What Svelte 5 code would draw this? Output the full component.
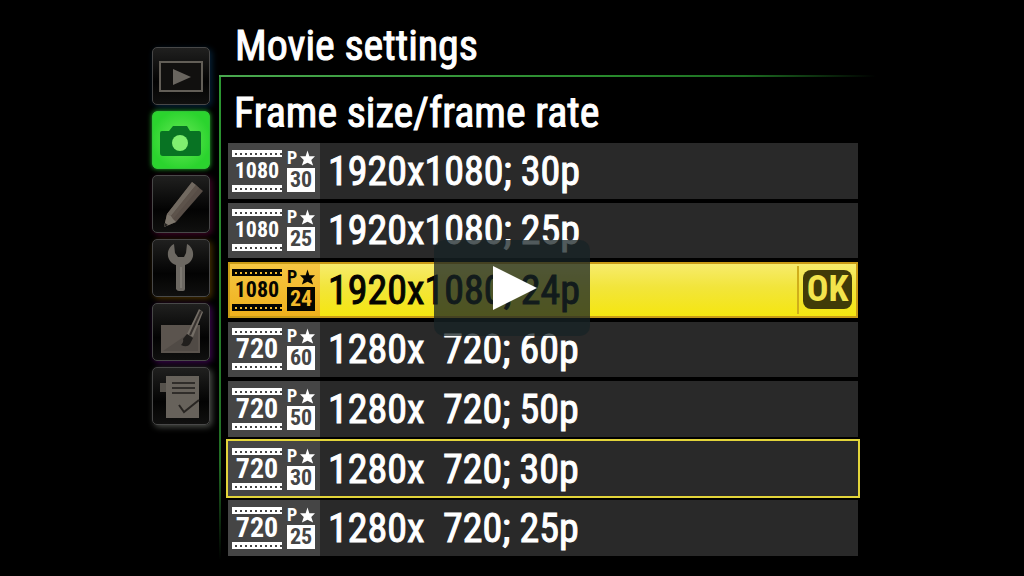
<script>
  let tabs = ["Playback", "Shooting", "Custom settings", "Setup", "Retouch", "My menu"];
  let activeTab = "Shooting";

  let modes = [
    { size: "1080", rate: "30", label: "1920x1080; 30p" },
    { size: "1080", rate: "25", label: "1920x1080; 25p" },
    { size: "1080", rate: "24", label: "1920x1080; 24p" },
    { size: "720", rate: "60", label: "1280x  720; 60p" },
    { size: "720", rate: "50", label: "1280x  720; 50p" },
    { size: "720", rate: "30", label: "1280x  720; 30p" },
    { size: "720", rate: "25", label: "1280x  720; 25p" },
  ];
  let selected = 2;
  let current = 5;
</script>

<main>
  <nav>
    {#each tabs as tab}
      <button
        class="tab {tab.split(' ')[0].toLowerCase()}"
        class:active={tab === activeTab}
        aria-label={tab}
        on:click={() => (activeTab = tab)}
      >
        <svg viewBox="0 0 56 56" aria-hidden="true">
          {#if tab === "Playback"}
            <rect x="7" y="14" width="42" height="29" fill="#11100f" stroke="#625e57" stroke-width="2" />
            <path d="M20 21L38 29L20 37Z" fill="#69655f" />
          {:else if tab === "Shooting"}
            <path
              d="M9 19H16L20 14H34L37 19H46Q48 19 48 21V41Q48 44 45 44H10Q7 44 7 41V21Q7 19 9 19Z"
              fill="#087323"
            />
            <circle cx="27" cy="31" r="8" fill="#80ef70" />
          {:else if tab === "Custom settings"}
            <path d="M39 6L50 15L23 46L11 51L14 38Z" fill="#574d46" />
            <path d="M39 6L43 9L18 40L14 38Z" fill="#716960" />
            <path d="M43 9L46 12L20 43L18 40Z" fill="#5d534b" />
            <path d="M14 38L18 40L20 43L23 46L11 51Z" fill="#7d766c" />
            <path d="M12 47L15 49L11 51Z" fill="#22201e" />
          {:else if tab === "Setup"}
            <path
              d="M21 4C13 8 12 21 23 25V49Q24 51 26 51H30Q32 51 32 49V25C43 21 42 8 34 4L33 13L31 17H25L22 13Z"
              fill="#6c6862"
            />
            <path d="M28 27V48" stroke="#7d7972" stroke-width="2" />
          {:else if tab === "Retouch"}
            <rect x="8" y="21" width="39" height="28" fill="#5b544e" />
            <path d="M10 47L45 23V47Z" fill="#504a45" />
            <path d="M46 5L50 8L40 33L34 30Z" fill="#746e66" />
            <path d="M48 7L37 31" stroke="#37322f" stroke-width="2" />
            <path d="M34 30L40 34L37 40Q34 44 28 41Q31 38 30 35Z" fill="#211f1d" />
          {:else}
            <path d="M7 15H14V24H7Z" fill="#56524c" />
            <path d="M13 8H46V50H13Z" fill="#67625b" />
            <path d="M19 15H42M19 20H42M19 25H42" stroke="#302d2a" stroke-width="2" />
            <path d="M26 37L31 44L46 32" fill="none" stroke="#282522" stroke-width="2" />
          {/if}
        </svg>
      </button>
    {/each}
  </nav>

  <section class="menu">
    <h1>Movie settings</h1>
    <div class="panel">
      <h2>Frame size/frame rate</h2>
      <ul>
        {#each modes as mode, i}
          <li>
            <button
              class="mode"
              class:selected={i === selected}
              class:current={i === current}
              on:click={() => (selected = i)}
            >
              <span class="badge">
                <span class="film" class:wide={mode.size === "720"}>
                  <span class="strip"></span>
                  <span class="size">{mode.size}</span>
                  <span class="strip"></span>
                </span>
                <span class="quality">
                  <span class="star">
                    P
                    <svg viewBox="0 0 16 16" aria-hidden="true">
                      <path d="M8 0L10 6H16L12 10L14 16L8 13L2 16L4 10L0 6H6Z" fill="currentColor" />
                    </svg>
                  </span>
                  <span class="rate">{mode.rate}</span>
                </span>
              </span>
              <span class="label">{mode.label}</span>
              {#if i === selected}
                <span class="confirm"><span class="ok">OK</span></span>
              {/if}
            </button>
          </li>
        {/each}
      </ul>
    </div>
  </section>

  <button class="play" aria-label="Play">
    <svg viewBox="0 0 44 44" aria-hidden="true"><path d="M0 0L44 22L0 44Z" fill="#fff" /></svg>
  </button>
</main>

<style>
  :global(body) {
    background: #000;
  }
  main {
    position: relative;
    box-sizing: border-box;
    display: flex;
    gap: 9px;
    min-height: 100vh;
    padding: 0 148px 16px 152px;
    color: #fff;
    font-family: "Roboto Condensed", "Roboto", sans-serif;
  }
  button {
    margin: 0;
    padding: 0;
    border: 0;
    color: inherit;
    font: inherit;
    cursor: pointer;
  }
  nav {
    display: flex;
    flex-direction: column;
    gap: 6px;
    padding-top: 47px;
  }
  .tab {
    box-sizing: border-box;
    width: 58px;
    height: 58px;
    border: 1px solid #484848;
    border-radius: 5px;
    background: linear-gradient(#20201f, #030303 60%, #10100f);
  }
  .tab svg {
    display: block;
  }
  .playback {
    box-shadow: 2px 2px 6px #062239;
  }
  .custom {
    box-shadow: 2px 2px 6px #400625;
  }
  .setup {
    box-shadow: 2px 2px 6px #483000;
  }
  .retouch {
    box-shadow: 2px 2px 6px #3b084c;
  }
  .my {
    box-shadow: 2px 2px 6px #4a4d48;
  }
  .tab.active {
    border-color: #31c537;
    background: radial-gradient(circle, #69e957, #2bd42e 75%);
    box-shadow: 0 0 5px #25b82e;
  }

  .menu {
    flex: 1;
    display: flex;
    flex-direction: column;
    min-width: 0;
  }
  h1,
  h2 {
    margin: 0;
    font-size: 42px;
    font-weight: 400;
    line-height: 52px;
    white-space: nowrap;
    -webkit-text-stroke: 1px currentColor;
  }
  h1 {
    box-sizing: border-box;
    height: 75px;
    padding: 20px 0 0 16px;
  }
  h2 {
    padding: 10px 0 4px 6px;
  }
  .panel {
    flex: 1;
    display: flex;
    flex-direction: column;
    padding: 2px 18px 4px 9px;
    background:
      linear-gradient(90deg, #4aa84f, #28892c 60%, #1d6e22 80%, transparent) top / 100% 2px no-repeat,
      linear-gradient(#2c9832, #226d25 80%, transparent) left / 2px 100% no-repeat;
  }
  ul {
    flex: 1;
    display: grid;
    grid-auto-rows: 1fr;
    gap: 4px;
    margin: 0;
    padding: 0;
    list-style: none;
  }
  li {
    display: grid;
  }
  .mode {
    --cell: #454545;
    display: flex;
    align-items: stretch;
    background: #292929;
    text-align: left;
  }
  .badge {
    box-sizing: border-box;
    display: flex;
    align-items: center;
    gap: 5px;
    width: 92px;
    padding-left: 4px;
    background: var(--cell);
  }
  .film {
    display: flex;
    flex-direction: column;
    width: 50px;
    text-align: center;
  }
  .strip {
    height: 7px;
    background:
      repeating-linear-gradient(90deg, transparent 0 3px, var(--cell) 3px 5px) 0 3px / 100% 2px no-repeat,
      currentColor;
  }
  .size {
    font-size: 22px;
    font-weight: 700;
    line-height: 28px;
  }
  .wide .size {
    font-size: 28px;
  }
  .quality {
    display: flex;
    flex-direction: column;
    gap: 2px;
    width: 28px;
  }
  .star {
    display: flex;
    align-items: center;
    justify-content: space-between;
    font-size: 18px;
    font-weight: 700;
    line-height: 16px;
  }
  .star svg {
    width: 15px;
    height: 16px;
  }
  .rate {
    background: #fff;
    color: var(--cell);
    font-size: 22px;
    font-weight: 700;
    line-height: 24px;
    text-align: center;
  }
  .label {
    align-self: center;
    flex: 1;
    padding: 2px 0 0 8px;
    font-size: 40px;
    line-height: 50px;
    white-space: pre;
    -webkit-text-stroke: 1px currentColor;
  }
  .selected {
    --cell: #f2b92b;
    background: linear-gradient(#f7ec70, #f2e53b 45%, #f5e60d);
    box-shadow: inset 0 0 0 2px #c99b16;
    color: #050500;
  }
  .selected .badge {
    background: linear-gradient(#f5c744, #efb01b);
    box-shadow: inset 0 2px #c99b16, inset 2px -2px #c99b16;
  }
  .selected .rate {
    background: #050500;
  }
  .current {
    outline: 2px solid #e2d43a;
  }
  .confirm {
    display: flex;
    align-items: center;
    margin: 4px 0;
    padding: 0 6px 0 4px;
    border-left: 2px solid #cfae1b;
  }
  .ok {
    width: 49px;
    border-radius: 8px;
    background: #403b08;
    color: #f3e44c;
    font-size: 36px;
    font-weight: 700;
    line-height: 39px;
    text-align: center;
  }
  .play {
    position: absolute;
    top: 50%;
    left: 50%;
    box-sizing: border-box;
    display: flex;
    align-items: center;
    justify-content: center;
    width: 156px;
    height: 96px;
    padding-left: 6px;
    border-radius: 10px;
    background: rgba(23, 35, 37, 0.75);
    transform: translate(-50%, -50%);
  }
  .play svg {
    width: 44px;
    height: 44px;
  }
</style>
